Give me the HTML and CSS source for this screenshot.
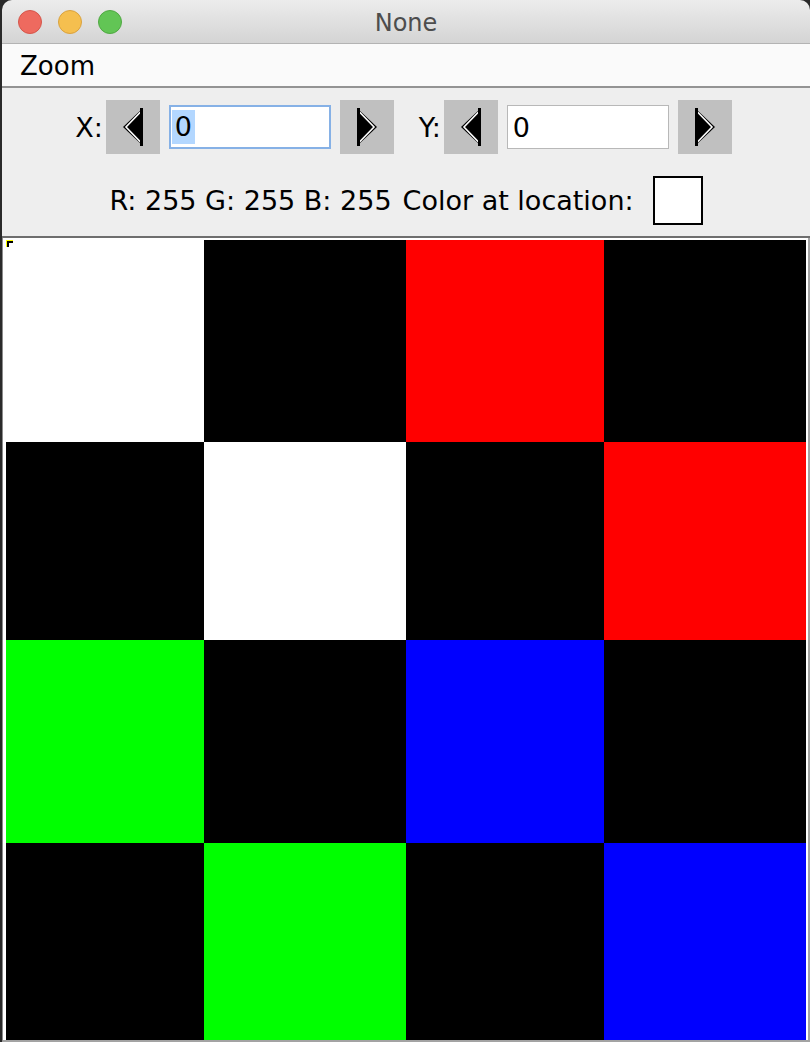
FILE: index.html
```html
<!DOCTYPE html>
<html>
<head>
<meta charset="utf-8">
<link rel="stylesheet" href="styles.css">
</head>
<body>
<div class="window">
  <div class="titlebar">
    <div class="lights">
      <span class="light red"></span>
      <span class="light yellow"></span>
      <span class="light green"></span>
    </div>
    <div class="title">None</div>
  </div>
  <div class="menubar"><span class="menu">Zoom</span></div>
  <div class="panel">
    <div class="row row-coords">
      <span class="label lbl-x">X:</span>
      <button class="arrow-btn btn-gap-s">
        <svg width="20" height="38" viewBox="0 0 20 38"><polygon points="20,0 0,19 20,38" fill="#000"/><polyline points="17.5,4 3,19 17.5,34" fill="none" stroke="#fff" stroke-width="1.6"/><line x1="18.5" y1="0" x2="18.5" y2="38" stroke="#000" stroke-width="3"/></svg>
      </button>
      <div class="field focused"><span class="sel">0</span></div>
      <button class="arrow-btn">
        <svg width="20" height="38" viewBox="0 0 20 38"><polygon points="0,0 20,19 0,38" fill="#000"/><polyline points="2.5,4 17,19 2.5,34" fill="none" stroke="#fff" stroke-width="1.6"/><line x1="1.5" y1="0" x2="1.5" y2="38" stroke="#000" stroke-width="3"/></svg>
      </button>
      <span class="label lbl-y">Y:</span>
      <button class="arrow-btn btn-gap-s">
        <svg width="20" height="38" viewBox="0 0 20 38"><polygon points="20,0 0,19 20,38" fill="#000"/><polyline points="17.5,4 3,19 17.5,34" fill="none" stroke="#fff" stroke-width="1.6"/><line x1="18.5" y1="0" x2="18.5" y2="38" stroke="#000" stroke-width="3"/></svg>
      </button>
      <div class="field"><span class="val">0</span></div>
      <button class="arrow-btn">
        <svg width="20" height="38" viewBox="0 0 20 38"><polygon points="0,0 20,19 0,38" fill="#000"/><polyline points="2.5,4 17,19 2.5,34" fill="none" stroke="#fff" stroke-width="1.6"/><line x1="1.5" y1="0" x2="1.5" y2="38" stroke="#000" stroke-width="3"/></svg>
      </button>
    </div>
    <div class="row row-color">
      <span class="label">R: 255 G: 255 B: 255</span>
      <span class="label lbl-color">Color at location:</span>
      <span class="swatch"></span>
    </div>
  </div>
  <div class="canvas">
    <div class="grid">
      <div class="c w"></div><div class="c k"></div><div class="c r"></div><div class="c k"></div>
      <div class="c k"></div><div class="c w"></div><div class="c k"></div><div class="c r"></div>
      <div class="c g"></div><div class="c k"></div><div class="c b"></div><div class="c k"></div>
      <div class="c k"></div><div class="c g"></div><div class="c k"></div><div class="c b"></div>
      <span class="marker"></span>
    </div>
  </div>
</div>
</body>
</html>
```
FILE: styles.css
```css
html, body {
  margin: 0;
  padding: 0;
  background: #2a2a2a;
  overflow: hidden;
}
.window {
  margin-left: 2px;
  width: 808px;
  height: 1042px;
  border-radius: 10px 10px 0 0;
  overflow: hidden;
  font-family: "DejaVu Sans", sans-serif;
  color: #000;
}
.titlebar {
  height: 43px;
  border-bottom: 1px solid #b3b3b3;
  background: linear-gradient(#ececec, #d4d4d4);
  display: flex;
  align-items: center;
  position: relative;
}
.lights {
  display: flex;
  gap: 16px;
  margin-left: 16px;
}
.light {
  width: 22px;
  height: 22px;
  border-radius: 50%;
  border: 1px solid;
}
.red { background: #ee6a5f; border-color: #d4564b; }
.yellow { background: #f5bf4f; border-color: #d9a23f; }
.green { background: #62c555; border-color: #50a843; }
.title {
  position: absolute;
  left: 0;
  right: 0;
  top: 0;
  bottom: 0;
  display: flex;
  justify-content: center;
  align-items: center;
  font-size: 24px;
  color: #4d4d4d;
  padding-top: 2px;
}
.menubar {
  height: 42px;
  background: #fafafa;
  border-bottom: 2px solid #939393;
  display: flex;
  align-items: center;
}
.menu {
  font-size: 26px;
  margin-left: 18px;
  padding-top: 2px;
}
.panel {
  height: 150px;
  background: #eeeeee;
  border-bottom: 2px solid #6e6e6e;
  box-sizing: border-box;
  padding-top: 12px;
}
.row {
  display: flex;
  justify-content: center;
  align-items: center;
}
.label {
  font-size: 27px;
  white-space: nowrap;
}
.row-coords {
  height: 54px;
  padding-left: 4px;
}
.arrow-btn {
  width: 54px;
  height: 54px;
  border: none;
  padding: 0;
  margin: 0 9px 0 9px;
  background: #c0c0c0;
  display: flex;
  align-items: center;
  justify-content: center;
}
.btn-gap-s { margin-left: 3px; }
.lbl-y { margin-left: 16px; }
.field {
  width: 162px;
  height: 44px;
  box-sizing: border-box;
  background: #fff;
  border: 1px solid #b8b8b8;
  font-size: 27px;
  display: flex;
  align-items: center;
  padding-left: 2px;
}
.field.focused {
  border: 2px solid #86b1e6;
  padding-left: 1px;
}
.sel {
  background: #b3d7ff;
  padding: 0 3px;
  line-height: 34px;
}
.val {
  padding-left: 3px;
}
.row-color {
  margin-top: 22px;
}
.lbl-color { margin-left: 11px; }
.swatch {
  width: 50px;
  height: 49px;
  box-sizing: border-box;
  border: 2px solid #000;
  background: #fff;
  margin-left: 19px;
}
.canvas {
  height: 800px;
  background: #fff;
  border-left: 1px solid #8c8c8c;
  border-right: 2px solid #a3a3a3;
  border-bottom: 2px solid #a3a3a3;
  padding: 2px 2px 0 3px;
}
.grid {
  position: relative;
  display: grid;
  grid-template-columns: 198px 202px 198px 202px;
  grid-template-rows: 202px 198px 203px 197px;
  width: 800px;
  height: 800px;
}
.c.w { background: #fff; }
.c.k { background: #000; }
.c.r { background: #ff0000; }
.c.g { background: #00ff00; }
.c.b { background: #0000ff; }
.marker {
  position: absolute;
  left: 0;
  top: 0;
  width: 6px;
  height: 6px;
  border-left: 1px solid #ffff00;
  border-top: 1px solid #ffff00;
  background:
    linear-gradient(#000, #000) 0 0 / 6px 2px no-repeat,
    linear-gradient(#000, #000) 0 0 / 2px 6px no-repeat,
    #fff;
}
```
